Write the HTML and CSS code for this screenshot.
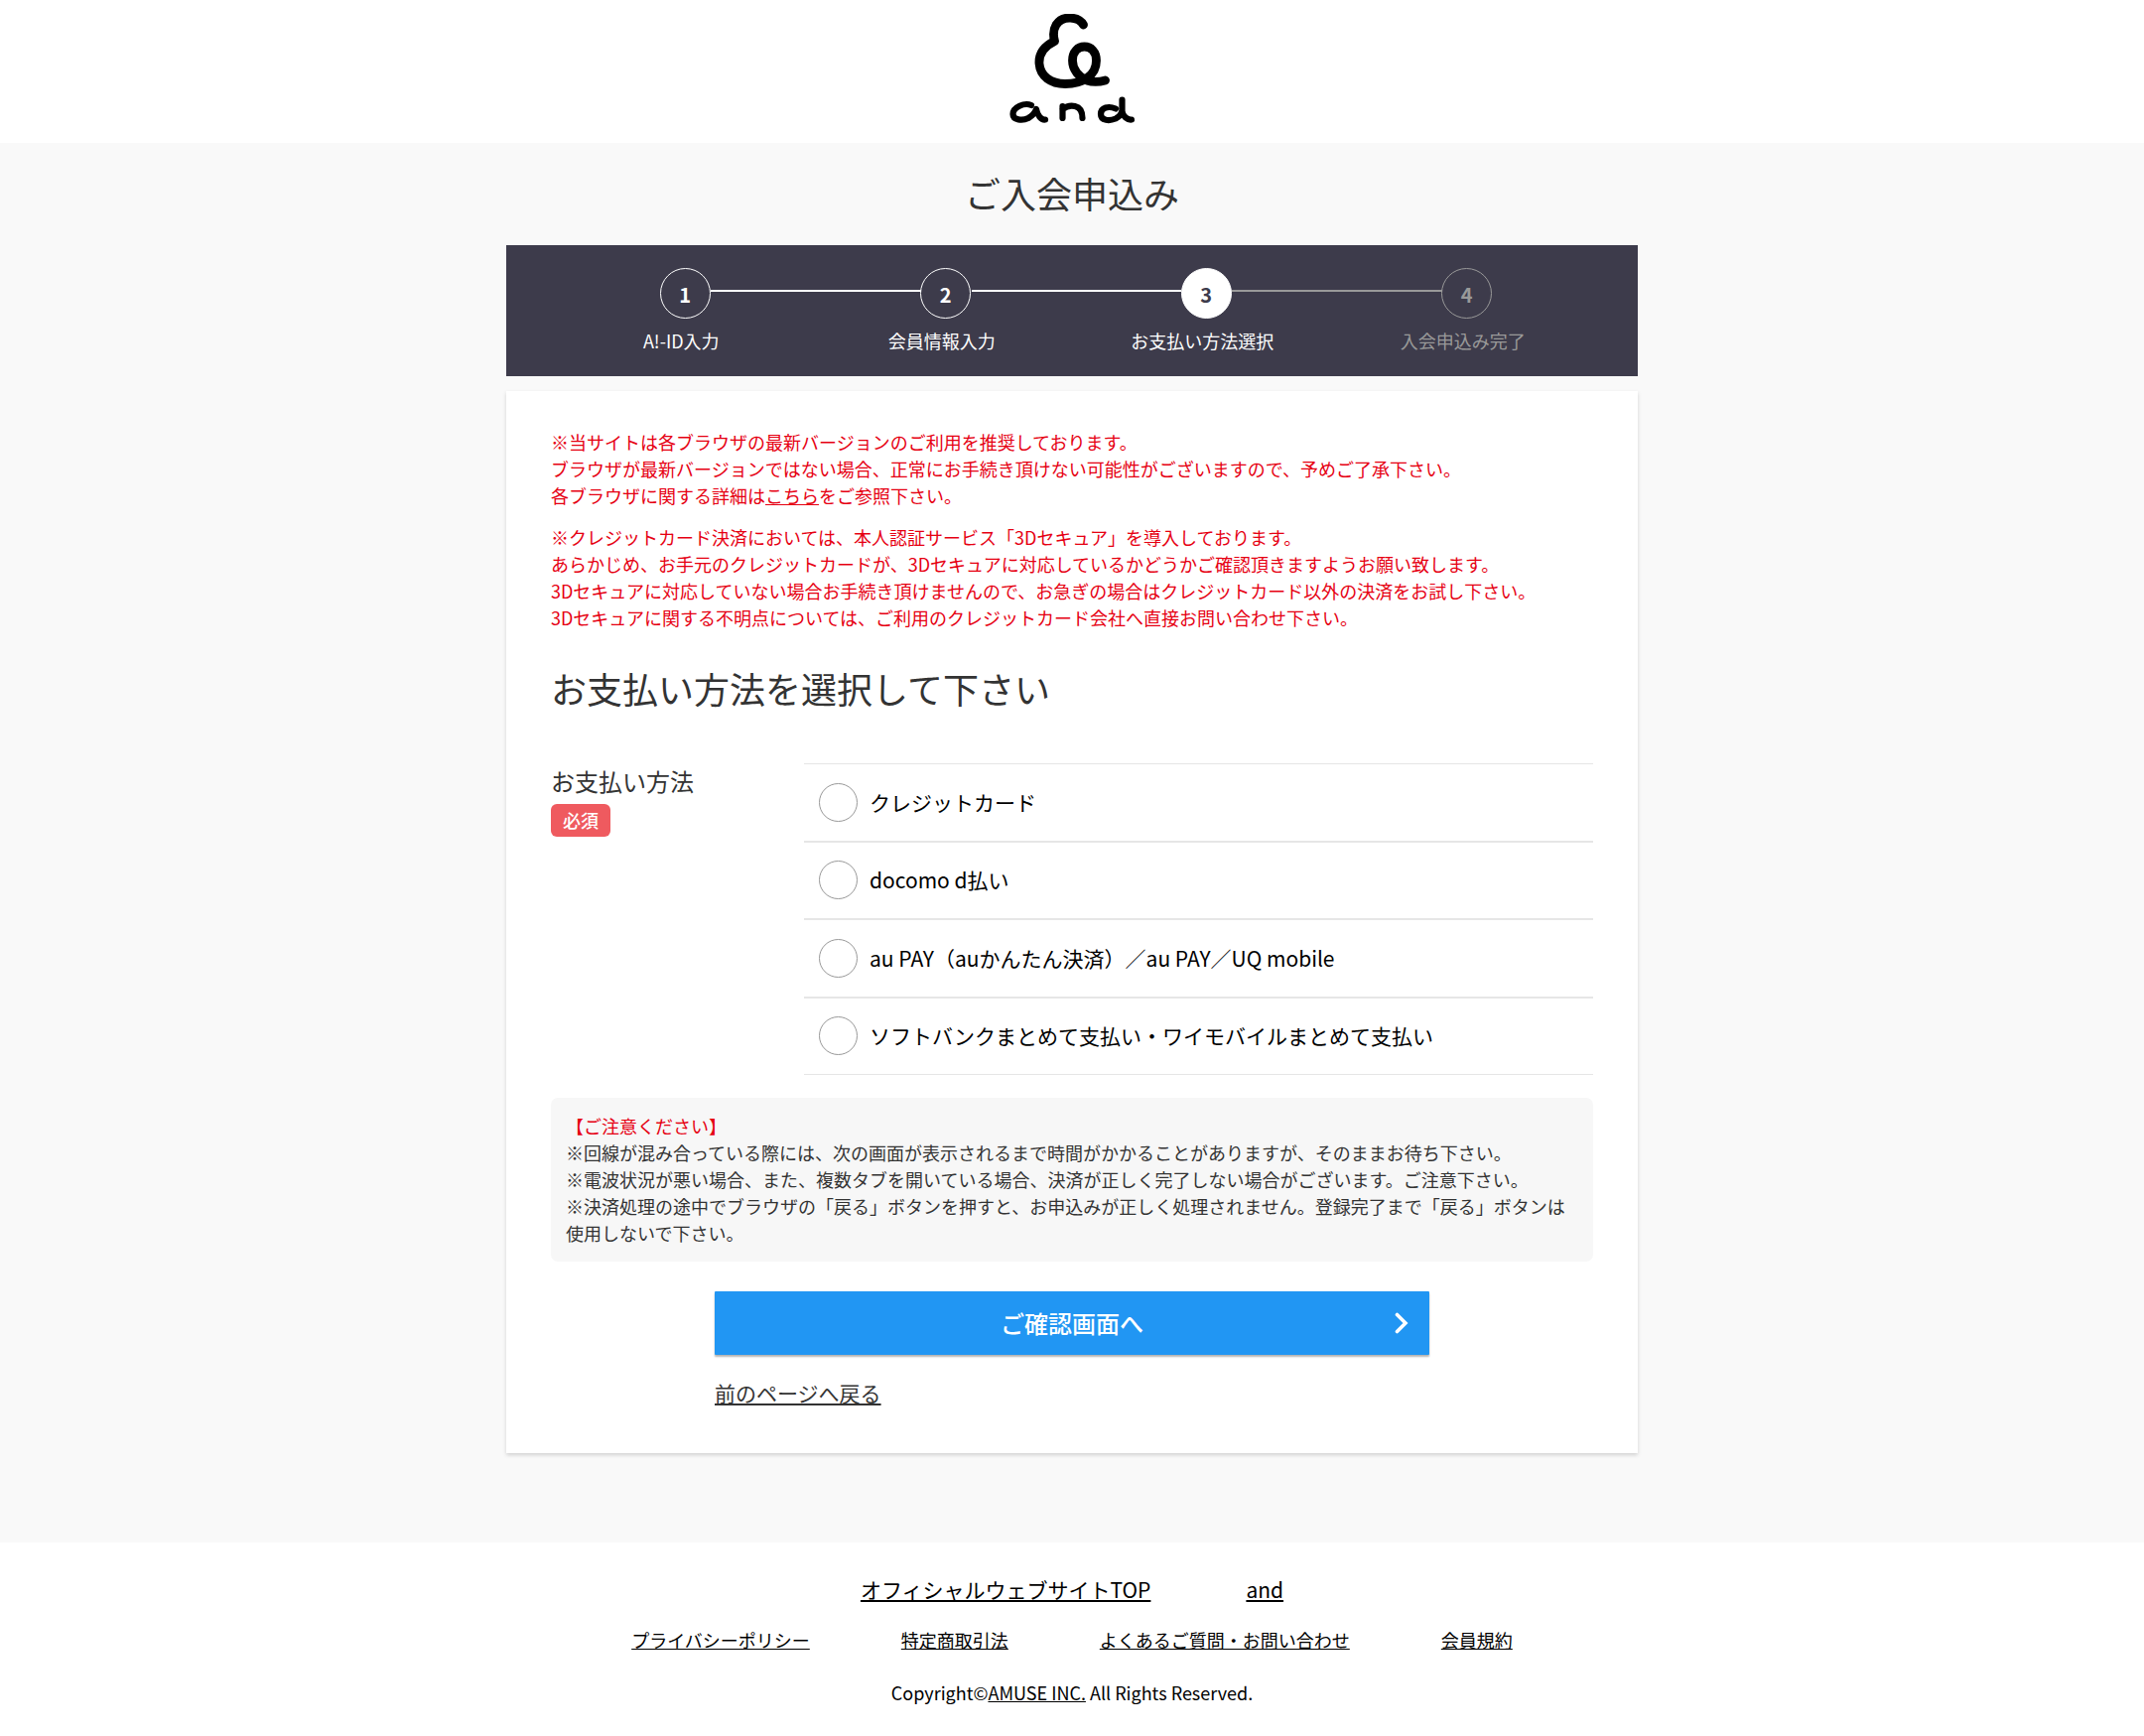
FILE: index.html
```html
<!DOCTYPE html>
<html lang="ja">
<head>
<meta charset="utf-8">
<meta name="viewport" content="width=device-width, initial-scale=1">
<title>ご入会申込み | and</title>
<link rel="stylesheet" href="styles.css">
</head>
<body>
<header class="header">
  <svg class="logo" viewBox="0 0 126 112" role="img" aria-label="and">
    <g fill="none" stroke="#000" stroke-linecap="round" stroke-linejoin="round">
      <path stroke-width="8.8" d="M74.500 11C70 3 54 0.500 47 11C44 16 44 22 45.500 27.500C34 33 29.500 41 30 50C31 63 42 70.500 56 70.500C74 70.500 87.500 62 87.500 47C87.500 38 82 33 75.500 33C69 33 63.500 38 63.500 47C63.500 56 70 64 78 67C84 69 91 68.500 96.500 67"/>
      <path stroke-width="6.2" d="M22 92C15 89 3.500 94 3.500 101C3.500 107 13 108 19 105C24 102 26 99 27 96C28 102 32 107 36 106.500M53.500 93V105M53.500 96C60 91 73.500 90 73.500 105M107 95.500C100 92.500 92 94 92 101C92 108 101 108 107 105.500C112 103 113 100 113.500 97V86.500V98C114 103 119 107 123 106.500"/>
    </g>
  </svg>
</header>

<main class="main">
  <h1 class="page-title">ご入会申込み</h1>

  <ol class="steps">
    <li class="step"><span class="step-number">1</span><span class="step-label">A!-ID入力</span></li>
    <li class="step"><span class="step-number">2</span><span class="step-label">会員情報入力</span></li>
    <li class="step step-current" aria-current="step"><span class="step-number">3</span><span class="step-label">お支払い方法選択</span></li>
    <li class="step step-todo"><span class="step-number">4</span><span class="step-label">入会申込み完了</span></li>
  </ol>

  <form class="card">
    <p class="alert">※当サイトは各ブラウザの最新バージョンのご利用を推奨しております。<br>
      ブラウザが最新バージョンではない場合、正常にお手続き頂けない可能性がございますので、予めご了承下さい。<br>
      各ブラウザに関する詳細は<a href="#">こちら</a>をご参照下さい。</p>
    <p class="alert">※クレジットカード決済においては、本人認証サービス「3Dセキュア」を導入しております。<br>
      あらかじめ、お手元のクレジットカードが、3Dセキュアに対応しているかどうかご確認頂きますようお願い致します。<br>
      3Dセキュアに対応していない場合お手続き頂けませんので、お急ぎの場合はクレジットカード以外の決済をお試し下さい。<br>
      3Dセキュアに関する不明点については、ご利用のクレジットカード会社へ直接お問い合わせ下さい。</p>

    <h2 class="section-title">お支払い方法を選択して下さい</h2>

    <div class="field" role="radiogroup" aria-labelledby="payment-label">
      <div class="field-head">
        <span class="field-name" id="payment-label">お支払い方法</span>
        <span class="badge">必須</span>
      </div>
      <div class="options">
        <label class="option"><input class="radio" type="radio" name="payment"><span>クレジットカード</span></label>
        <label class="option"><input class="radio" type="radio" name="payment"><span>docomo d払い</span></label>
        <label class="option"><input class="radio" type="radio" name="payment"><span>au PAY（auかんたん決済）／au PAY／UQ mobile</span></label>
        <label class="option"><input class="radio" type="radio" name="payment"><span>ソフトバンクまとめて支払い・ワイモバイルまとめて支払い</span></label>
      </div>
    </div>

    <div class="caution">
      <p class="caution-title">【ご注意ください】</p>
      <p>※回線が混み合っている際には、次の画面が表示されるまで時間がかかることがありますが、そのままお待ち下さい。</p>
      <p>※電波状況が悪い場合、また、複数タブを開いている場合、決済が正しく完了しない場合がございます。ご注意下さい。</p>
      <p>※決済処理の途中でブラウザの「戻る」ボタンを押すと、お申込みが正しく処理されません。登録完了まで「戻る」ボタンは使用しないで下さい。</p>
    </div>

    <div class="actions">
      <button class="submit" type="button">
        <span>ご確認画面へ</span>
        <svg class="chevron" viewBox="0 0 14 22" aria-hidden="true"><path d="M2.500 2.500L11 11L2.500 19.500" fill="none" stroke="#fff" stroke-width="3.6" stroke-linecap="round"/></svg>
      </button>
      <a class="back" href="#">前のページへ戻る</a>
    </div>
  </form>
</main>

<footer class="footer">
  <nav class="links links-main">
    <a href="#">オフィシャルウェブサイトTOP</a>
    <a href="#">and</a>
  </nav>
  <nav class="links">
    <a href="#">プライバシーポリシー</a>
    <a href="#">特定商取引法</a>
    <a href="#">よくあるご質問・お問い合わせ</a>
    <a href="#">会員規約</a>
  </nav>
  <p class="copyright">Copyright©<a href="#">AMUSE INC.</a> All Rights Reserved.</p>
</footer>
</body>
</html>
```
FILE: styles.css
```css
* {
  box-sizing: border-box;
}

body {
  margin: 0;
  background: #fff;
  color: #333;
  font: 18px/27px "Noto Sans CJK JP", sans-serif;
}

h1, h2, p, ol {
  margin: 0;
  padding: 0;
  font-weight: 400;
}

a {
  color: inherit;
}

.header {
  display: flex;
  justify-content: center;
  padding: 14px 0 18px;
}

.logo {
  display: block;
  width: 126px;
  height: 112px;
}

.main {
  padding: 22px 16px 90px;
  background: #f9f9f9;
}

.page-title {
  margin-bottom: 25px;
  font-size: 36px;
  line-height: 56px;
  text-align: center;
}

.steps,
.card {
  max-width: 1140px;
  margin: 0 auto;
}

.steps {
  display: grid;
  grid-template-columns: repeat(4, 1fr);
  margin-bottom: 15px;
  padding: 23px 45px 22px;
  background: #3d3b4b;
  color: #fff;
  list-style: none;
}

.step {
  position: relative;
  display: flex;
  flex-direction: column;
  align-items: center;
  gap: 9px;
}

.step-number {
  width: 51px;
  height: 51px;
  margin-left: 8px;
  border: 1px solid currentColor;
  border-radius: 50%;
  font-size: 20px;
  font-weight: 700;
  line-height: 52px;
  text-align: center;
}

.step + .step::before {
  content: "";
  position: absolute;
  top: 22px;
  right: calc(50% + 21px);
  width: calc(100% - 51px);
  height: 2px;
  background: currentColor;
}

.step-current .step-number {
  border-color: #fff;
  background: #fff;
  color: #3d3b4b;
}

.step-todo {
  color: #999;
}

.card {
  padding: 38px 45px 45px;
  background: #fff;
  box-shadow: 0 2px 4px rgba(0, 0, 0, 0.16);
}

.alert {
  margin-bottom: 15px;
  color: #e60012;
}

.section-title {
  margin: 29px 0 48px;
  font-size: 36px;
  line-height: 56px;
}

.field {
  display: grid;
  grid-template-columns: 255px 1fr;
  margin-bottom: 23px;
}

.field-head {
  display: flex;
  flex-direction: column;
  align-items: flex-start;
  gap: 5px;
}

.field-name {
  font-size: 24px;
  line-height: 36px;
}

.badge {
  padding: 0 12px;
  border-radius: 6px;
  background: #ef5a5f;
  color: #fff;
  font-weight: 500;
  line-height: 33px;
}

.options {
  display: flex;
  flex-direction: column;
  min-height: 314px;
  border: solid #e6e6e6;
  border-width: 1px 0;
}

.option {
  display: flex;
  flex: 1;
  align-items: center;
  gap: 12px;
  padding: 0 15px;
  color: #000;
  font-size: 21px;
}

.option + .option {
  border-top: 2px solid #e6e6e6;
}

.radio {
  flex: none;
  appearance: none;
  width: 39px;
  height: 39px;
  margin: 0;
  border: 1px solid #999;
  border-radius: 50%;
  background: #fff;
}

.radio:checked {
  border: 12px solid #2196f3;
}

.caution {
  padding: 15px;
  border-radius: 7px;
  background: #f7f7f7;
}

.caution-title {
  color: #e60012;
}

.actions {
  display: flex;
  flex-direction: column;
  align-items: flex-start;
  gap: 22px;
  max-width: 720px;
  margin: 30px auto 0;
}

.submit {
  position: relative;
  width: 100%;
  height: 64px;
  padding: 0 0 2px;
  border: 0;
  border-radius: 1px;
  background: #2196f3;
  box-shadow: 0 2px 2px rgba(0, 0, 0, 0.3);
  color: #fff;
  font-family: inherit;
  font-size: 24px;
  font-weight: 500;
}

.chevron {
  position: absolute;
  top: 21px;
  right: 21px;
  width: 14px;
  height: 22px;
}

.back {
  font-size: 21px;
  line-height: 32px;
}

.footer {
  padding: 31px 16px 29px;
  color: #000;
  text-align: center;
}

.links {
  display: flex;
  flex-wrap: wrap;
  justify-content: center;
  gap: 0 92px;
  margin-bottom: 26px;
}

.links-main {
  gap: 0 96px;
  margin-bottom: 22px;
  font-size: 21px;
  line-height: 32px;
}
```
